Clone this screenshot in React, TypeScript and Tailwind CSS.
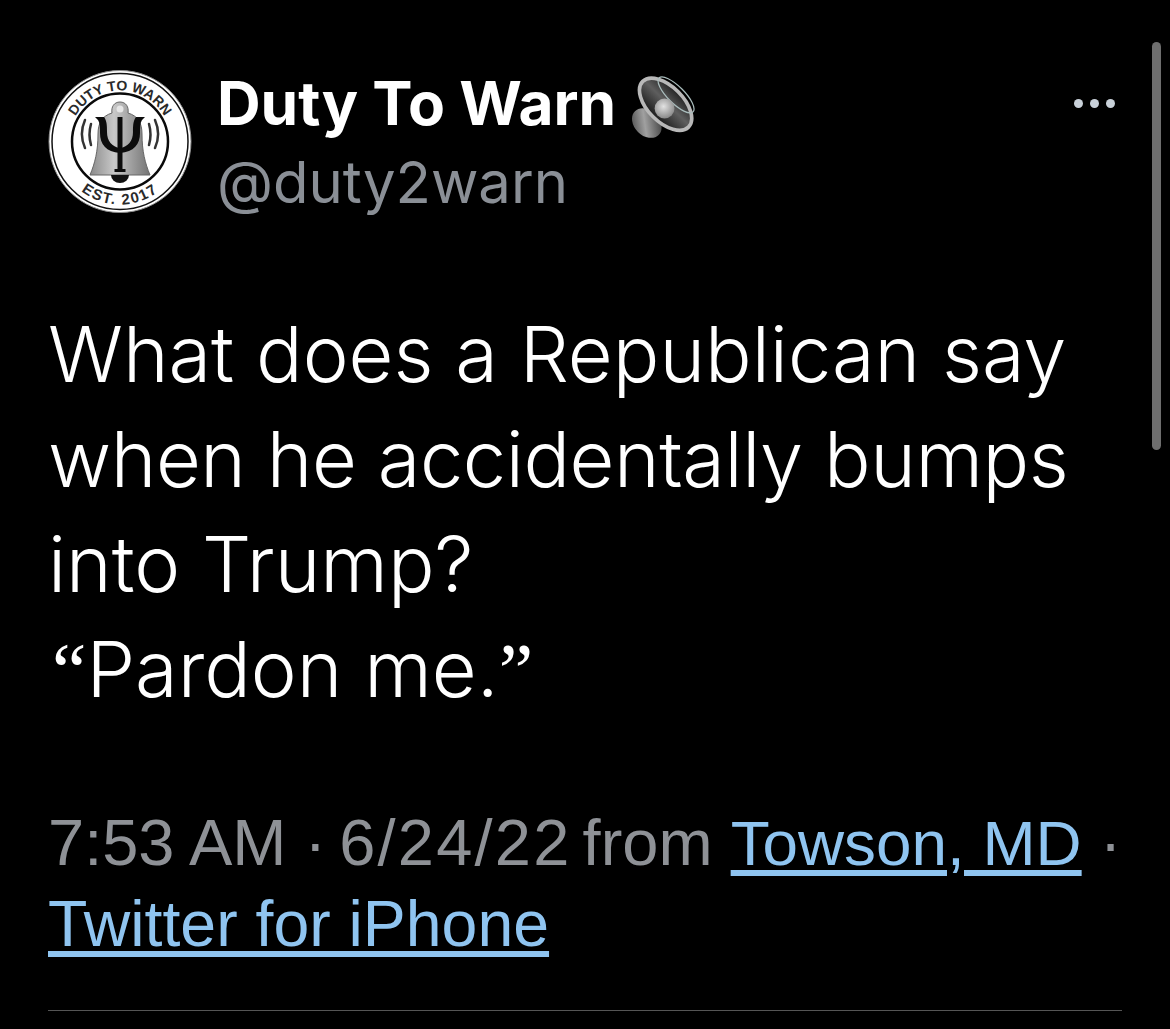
import React from "react";

function Logo() {
  return (
    <svg width="146" height="146" viewBox="0 0 146 146" className="shrink-0">
      <defs>
        <path id="topArc" d="M 21 71.5 A 51 51 0 0 1 123 71.5" fill="none" />
        <path id="botArc" d="M 9 71.5 A 63 63 0 0 0 135 71.5" fill="none" />
        <linearGradient id="bell" x1="0" y1="0" x2="1" y2="0">
          <stop offset="0" stopColor="#8a8a8a" />
          <stop offset="0.4" stopColor="#c8c8c8" />
          <stop offset="1" stopColor="#737373" />
        </linearGradient>
      </defs>
      <circle cx="72" cy="71.5" r="71" fill="#fff" stroke="#8f8f8f" strokeWidth="1" />
      <circle cx="72" cy="71.5" r="68" fill="none" stroke="#111" strokeWidth="1.5" />
      <circle cx="72" cy="71.5" r="48" fill="#fff" stroke="#0a0a0a" strokeWidth="2.5" />
      <text fontFamily="Liberation Sans" fontWeight="700" fontSize="14" fill="#2a2a2a">
        <textPath href="#topArc" startOffset="50%" textAnchor="middle">DUTY TO WARN</textPath>
      </text>
      <text fontFamily="Liberation Sans" fontWeight="700" fontSize="15" fill="#2a2a2a" letterSpacing="1.6">
        <textPath href="#botArc" startOffset="50%" textAnchor="middle">EST. 2017</textPath>
      </text>
      <path d="M72 32c-6 0-9 5-8 11-10 3-14 10-14 21 0 17-3 29-8 41h60c-5-12-8-24-8-41 0-11-4-18-14-21 1-6-2-11-8-11z" fill="url(#bell)" stroke="#666" strokeWidth="1" />
      <circle cx="72" cy="39" r="3.5" fill="#e6e6e6" />
      <path d="M63 105a9 8 0 0 0 18 0z" fill="#111" />
      <path d="M69.5 47h5v52h3v3h-11v-3h3z" fill="#0c0c0c" />
      <path d="M56 47h-9l3 3c2 3 2 8 2 13 0 11 6 19 20 20v-5c-8-1-13-7-13-16 0-6 0-11-3-15zM88 47h9l-3 3c-2 3-2 8-2 13 0 11-6 19-20 20v-5c8-1 13-7 13-16 0-6 0-11 3-15z" fill="#0c0c0c" />
      <path d="M37 50c-4 9-4 19 0 28M43 54c-2 7-2 14 0 21M107 50c4 9 4 19 0 28M101 54c2 7 2 14 0 21" fill="none" stroke="#333" strokeWidth="2.5" strokeLinecap="round" />
    </svg>
  );
}

function Speaker() {
  return (
    <svg width="71" height="69" viewBox="0 0 68 66" className="mt-[7px] shrink-0">
      <defs>
        <linearGradient id="mag" x1="0" y1="0" x2="1" y2="1">
          <stop offset="0" stopColor="#3c3c3c" />
          <stop offset="0.45" stopColor="#a0a0a0" />
          <stop offset="1" stopColor="#2c2c2c" />
        </linearGradient>
        <linearGradient id="cone" x1="0" y1="0" x2="1" y2="0">
          <stop offset="0" stopColor="#1a1a1a" />
          <stop offset="0.55" stopColor="#5e5e5e" />
          <stop offset="1" stopColor="#222" />
        </linearGradient>
        <radialGradient id="dome" cx="0.45" cy="0.4" r="0.6">
          <stop offset="0" stopColor="#e2e2e2" />
          <stop offset="1" stopColor="#8a8a8a" />
        </radialGradient>
      </defs>
      <ellipse cx="18" cy="46" rx="12" ry="16" transform="rotate(-45 18 46)" fill="url(#mag)" />
      <ellipse cx="36" cy="28" rx="17" ry="31" transform="rotate(-45 36 28)" fill="url(#cone)" stroke="#b8b8b8" strokeWidth="3.5" />
      <ellipse cx="46" cy="19" rx="8" ry="23" transform="rotate(-45 46 19)" fill="none" stroke="#a9bcbc" strokeWidth="1.2" />
      <circle cx="35" cy="32" r="9.5" fill="url(#dome)" />
    </svg>
  );
}

export default function App() {
  const sans = "font-['Inter','Liberation_Sans',sans-serif]";
  const serifQuote = "font-['Liberation_Serif',serif]";
  return (
    <div className={`relative h-[1029px] w-[1170px] overflow-hidden bg-black ${sans}`}>
      <div className="absolute left-[1152px] top-[42px] h-[408px] w-[9px] rounded-full bg-[#6e6e6e]" />

      <div className="flex flex-col px-[48px] pt-[70px]">
        <div className="flex items-start">
          <Logo />
          <div className="ml-[23px] flex min-w-0 flex-1 flex-col">
            <div className="-mt-[2px] flex h-[70px] items-start gap-[12px]">
              <span className="text-[60.4px] font-bold leading-[70px] text-white">Duty To Warn</span>
              <Speaker />
            </div>
            <span className="mt-[8px] text-[58px] leading-[72px] text-[#8a8f96]">@duty2warn</span>
          </div>
          <div className="mr-[7px] flex gap-[7px] pt-[29px]">
            <span className="h-[9px] w-[9px] rounded-full bg-[#c9d1d9]" />
            <span className="h-[9px] w-[9px] rounded-full bg-[#c9d1d9]" />
            <span className="h-[9px] w-[9px] rounded-full bg-[#c9d1d9]" />
          </div>
        </div>

        <div className="mt-[84px] text-[77.5px] font-light leading-[105px] text-white">
          <p>What does a Republican say</p>
          <p className="tracking-[-0.45px]">when he accidentally bumps</p>
          <p>into Trump?</p>
          <p className="ml-[4px]"><span className={serifQuote}>“</span>Pardon me.<span className={serifQuote}>”</span></p>
        </div>

        <div className="mt-[78px] font-['Liberation_Sans',sans-serif] text-[65px] leading-[81px] text-[#8e9196]">
          <div className="whitespace-nowrap">
            7:53 AM · <span className="-ml-[5px] tracking-[2.2px]">6/24/22</span>{" "}
            <span className="-ml-[7px]">from</span>{" "}
            <span className="text-[63.8px] text-[#8fc4f0] underline decoration-[6px] underline-offset-[5px]">Towson, MD</span> ·
          </div>
          <div className="whitespace-nowrap text-[64.4px] text-[#8fc4f0] underline decoration-[6px] underline-offset-[5px]">Twitter for iPhone</div>
        </div>

        <div className="mt-[45px] h-[1px] w-[1074px] bg-[#555555]" />
      </div>
    </div>
  );
}
